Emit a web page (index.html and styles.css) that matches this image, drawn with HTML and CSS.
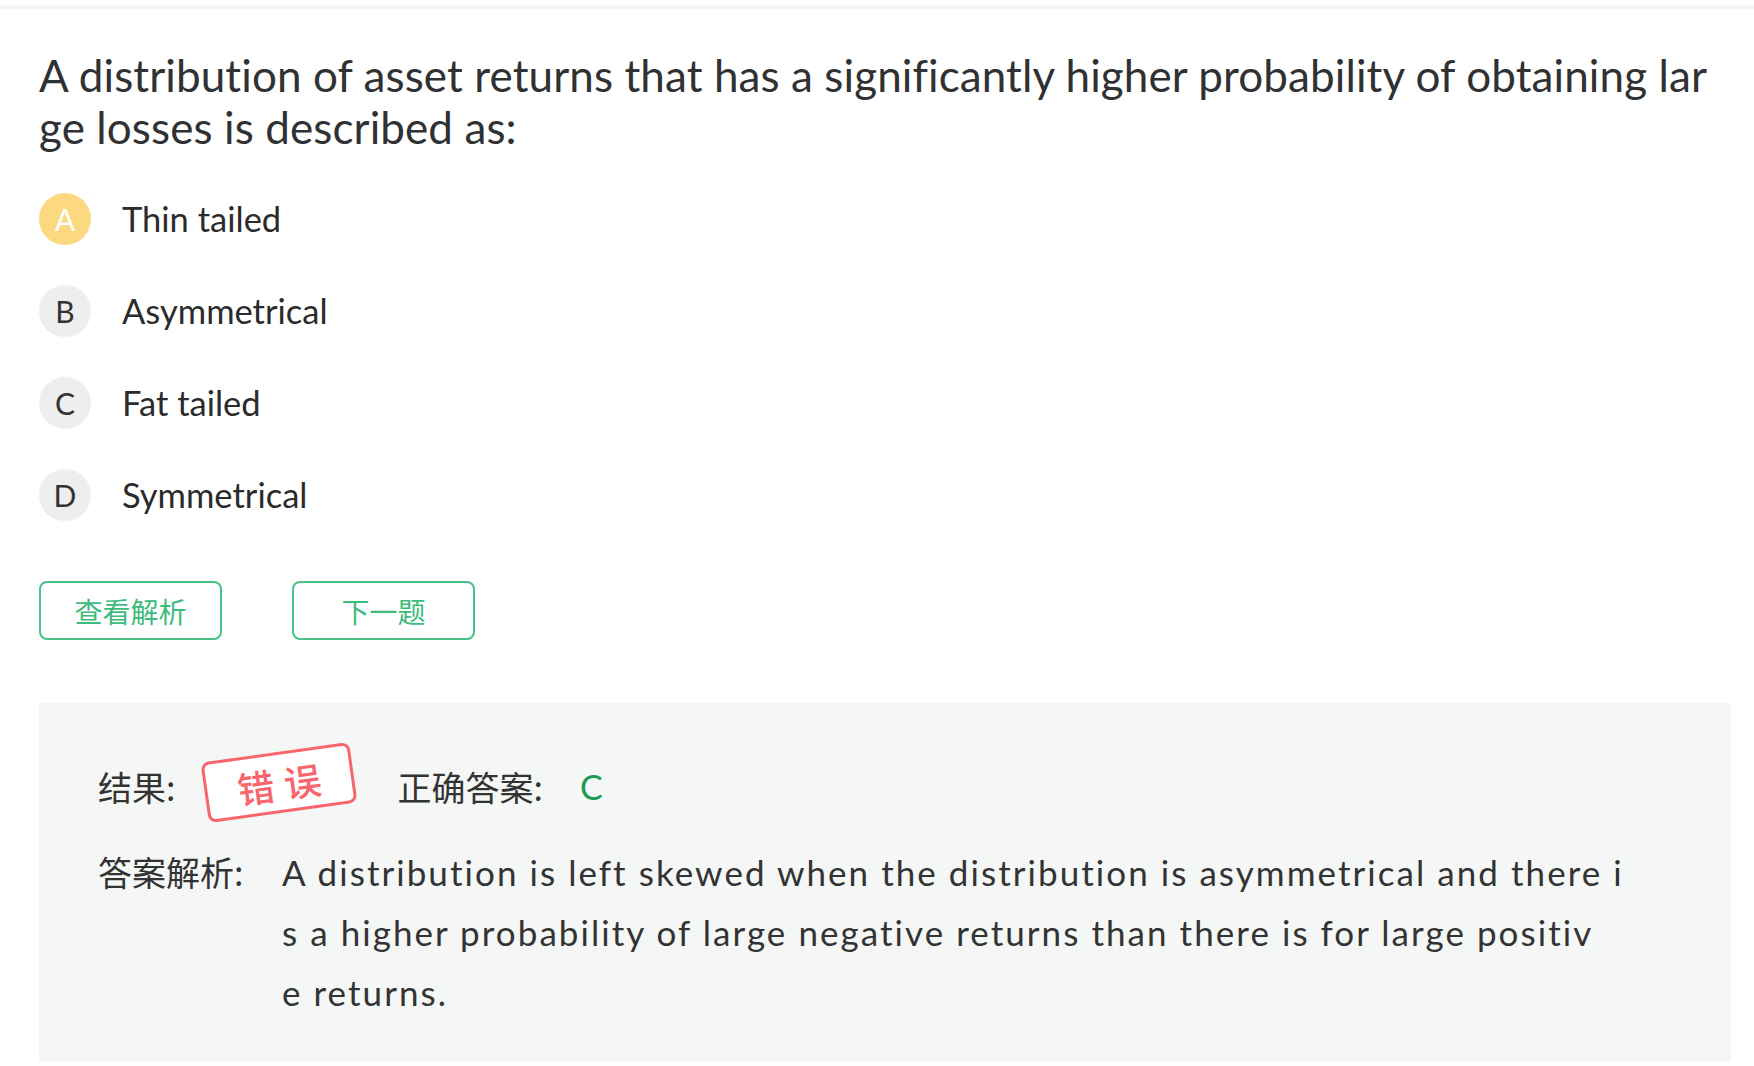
FILE: index.html
```html
<!DOCTYPE html>
<html lang="zh-CN">
<head>
<meta charset="utf-8">
<title>题目</title>
<link rel="stylesheet" href="styles.css">
</head>
<body>
<div class="topline"></div>
<main class="page">
  <h1 class="question">A distribution of asset returns that has a significantly higher probability of obtaining large losses is described as:</h1>
  <ul class="options">
    <li class="option"><span class="badge badge--picked">A</span><span class="opt-text">Thin tailed</span></li>
    <li class="option"><span class="badge">B</span><span class="opt-text">Asymmetrical</span></li>
    <li class="option"><span class="badge">C</span><span class="opt-text">Fat tailed</span></li>
    <li class="option"><span class="badge">D</span><span class="opt-text">Symmetrical</span></li>
  </ul>
  <div class="actions">
    <button class="btn" type="button">查看解析</button>
    <button class="btn" type="button">下一题</button>
  </div>
  <section class="result">
    <div class="result-row">
      <span class="label">结果:</span>
      <span class="stamp">错误</span>
      <span class="label correct-label">正确答案:</span>
      <span class="answer">C</span>
    </div>
    <div class="analysis">
      <span class="label analysis-label">答案解析:</span>
      <p class="analysis-text">A distribution is left skewed when the distribution is asymmetrical and there i<br>s a higher probability of large negative returns than there is for large positiv<br>e returns.</p>
    </div>
  </section>
</main>
</body>
</html>
```
FILE: styles.css
```css
body {
  margin: 0;
  background: #ffffff;
  font-family: "Lato", "Noto Sans CJK SC", sans-serif;
  font-variant-ligatures: none;
  color: #333333;
}

.topline {
  height: 4px;
  margin-top: 5px;
  background: #f6f6f6;
}

.page {
  padding: 0 23px 0 39px;
}

.question {
  margin: 40px 0 0;
  padding-right: 12px;
  font-size: 44px;
  font-weight: 400;
  line-height: 52px;
  letter-spacing: 0.1px;
  word-break: break-all;
  color: #303133;
}

.options {
  list-style: none;
  margin: 40px 0 0;
  padding: 0;
  display: flex;
  flex-direction: column;
  gap: 40px;
}

.option {
  display: flex;
  align-items: center;
  height: 52px;
}

.badge {
  flex-shrink: 0;
  width: 52px;
  height: 52px;
  border-radius: 50%;
  background: #eeeeee;
  color: #333333;
  display: flex;
  align-items: center;
  justify-content: center;
  font-size: 30px;
}

.badge--picked {
  background: #fcd980;
  color: #ffffff;
}

.opt-text {
  margin-left: 31px;
  font-size: 34.5px;
  line-height: 52px;
  color: #2b2b2b;
}

.actions {
  display: flex;
  gap: 70px;
  margin-top: 60px;
}

.btn {
  box-sizing: border-box;
  width: 183px;
  height: 59px;
  padding: 0;
  border: 2px solid #48c286;
  border-radius: 8px;
  background: #ffffff;
  color: #3dbb7d;
  font-family: "Noto Sans CJK SC", sans-serif;
  font-size: 28px;
}

.result {
  margin-top: 63px;
  background: #f4f7f6;
  padding: 53px 59px 40px;
}

.result-row {
  display: flex;
  align-items: center;
  height: 60px;
}

.label {
  font-family: "Noto Sans CJK SC", sans-serif;
  font-size: 34px;
  color: #333333;
}

.stamp {
  box-sizing: border-box;
  width: 150px;
  height: 61px;
  margin-left: 29px;
  padding-left: 10px;
  border: 3px solid #f8656d;
  border-radius: 8px;
  background: #ffffff;
  color: #f8656d;
  font-family: "Noto Sans CJK SC", sans-serif;
  font-size: 37px;
  font-weight: 500;
  letter-spacing: 10px;
  display: flex;
  align-items: center;
  justify-content: center;
  transform: translateY(-4px) rotate(-8deg);
}

.correct-label {
  margin-left: 43px;
}

.answer {
  margin-left: 37px;
  font-size: 34px;
  color: #1a9b58;
}

.analysis {
  display: flex;
  margin-top: 26px;
}

.analysis-label {
  flex-shrink: 0;
  width: 184px;
  line-height: 60px;
}

.analysis-text {
  margin: 0;
  font-size: 35px;
  line-height: 60px;
  letter-spacing: 2.05px;
  white-space: nowrap;
  color: #333333;
}
```
